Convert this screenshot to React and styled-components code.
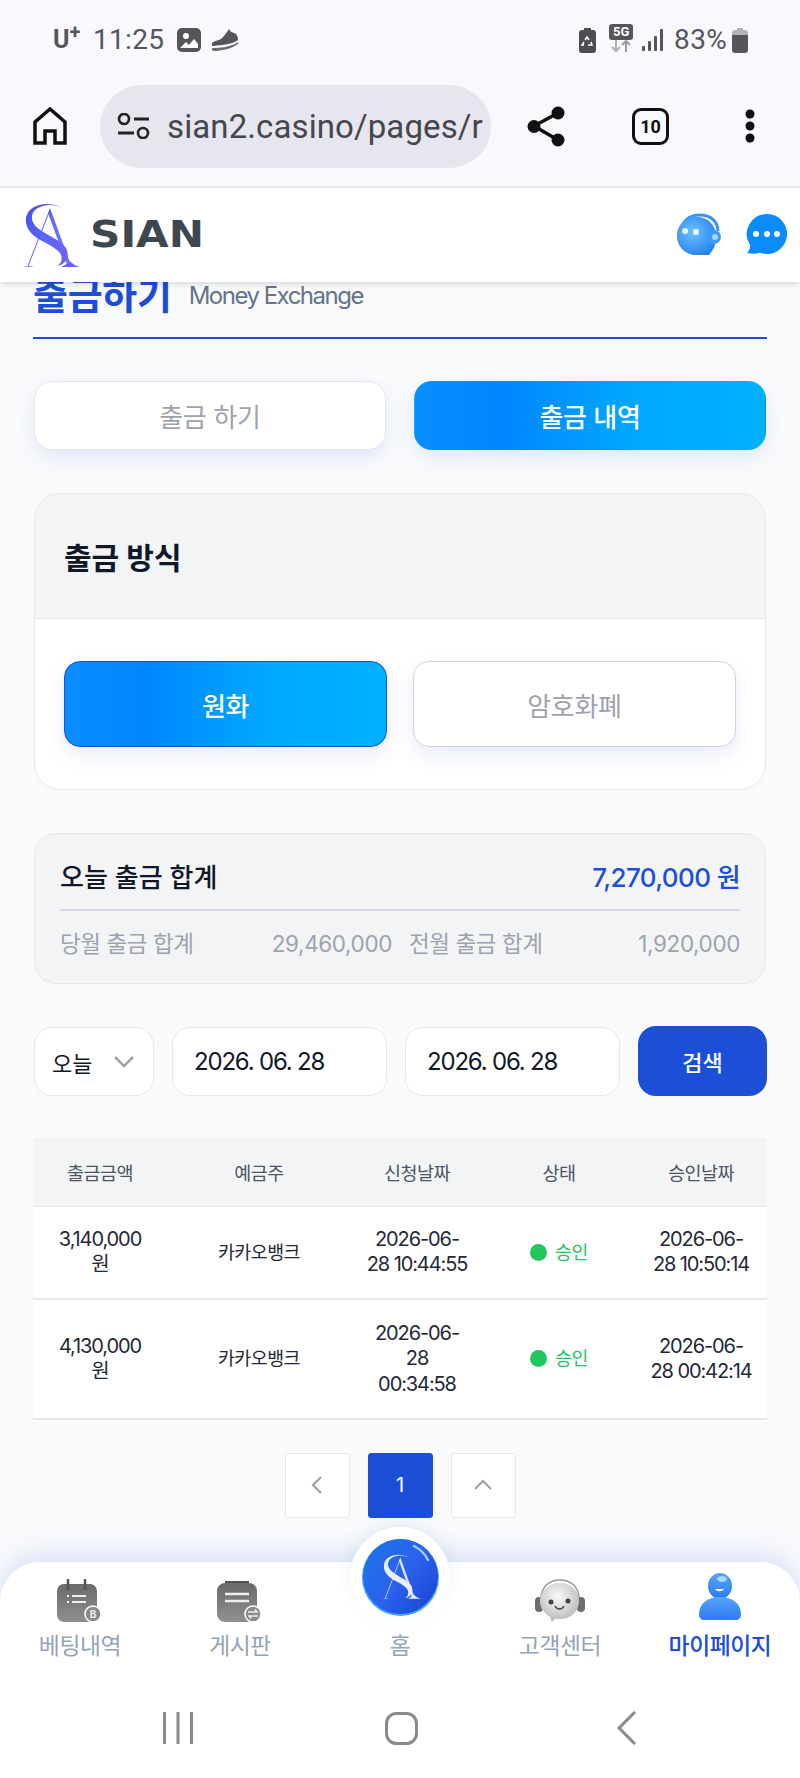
import styled, { createGlobalStyle } from "styled-components";

const GlobalStyle = createGlobalStyle`
  * { box-sizing: border-box; }
  html, body { margin: 0; padding: 0; background: #f9fafc; }
  body { font-family: Inter, "Noto Sans CJK KR", sans-serif; }
  button { font-family: inherit; }
`;

const BLUE = "#1d4ed8";
const GRADIENT = "linear-gradient(90deg, #0a8dff 0%, #0086ff 25%, #00aaff 65%, #00b0ff 100%)";

const Screen = styled.div`
  width: 800px;
  height: 1778px;
  display: flex;
  flex-direction: column;
  overflow: hidden;
  background: #f9fafc;
`;

const StatusBar = styled.div`
  height: 66px;
  padding: 14px 52px 0 53px;
  display: flex;
  align-items: center;
  justify-content: space-between;
  background: #f8f8fe;
  color: #55565b;
  font-family: Roboto, sans-serif;
`;

const StatusGroup = styled.div`
  display: flex;
  align-items: center;
`;

const Carrier = styled.span`
  font-size: 25px;
  font-weight: 700;
  width: 40px;
  line-height: 30px;
  sup { font-size: 20px; line-height: 0; margin-left: 0; vertical-align: 9px; }
`;

const StatusText = styled.span`
  font-size: 28px;
  line-height: 30px;
  letter-spacing: 0.3px;
  margin: ${(p) => p.$margin || 0};
`;

const NetBadge = styled.div`
  width: 24px;
  height: 28px;
  margin: -4px 9px 0 13px;
  display: flex;
  flex-direction: column;
  align-items: center;
`;

const NetLabel = styled.span`
  width: 24px;
  height: 16px;
  border-radius: 3px;
  background: #55565b;
  color: #fff;
  font-size: 13px;
  font-weight: 700;
  line-height: 16px;
  text-align: center;
`;

const BrowserBar = styled.div`
  height: 122px;
  padding: 0 0 0 33px;
  display: flex;
  align-items: center;
  background: #f8f8fe;
  border-bottom: 2px solid #e3e3e8;
`;

const UrlPill = styled.div`
  width: 391px;
  height: 83px;
  margin-left: 33px;
  padding-left: 17px;
  border-radius: 42px;
  background: #e6e6ee;
  display: flex;
  align-items: center;
  gap: 17px;
  overflow: hidden;
`;

const UrlText = styled.span`
  font-family: Roboto, sans-serif;
  font-size: 33px;
  color: #46464c;
  white-space: nowrap;
  letter-spacing: 0.1px;
`;

const BrowserIcon = styled.svg`
  display: block;
  flex: none;
  margin-left: ${(p) => p.$left || 0}px;
`;

const TabCount = styled.div`
  width: 37px;
  height: 37px;
  flex: none;
  margin-left: 67px;
  border: 3.5px solid #111;
  border-radius: 9px;
  font-family: Roboto, sans-serif;
  font-size: 18px;
  font-weight: 700;
  color: #111;
  display: flex;
  align-items: center;
  justify-content: center;
`;

const Viewport = styled.div`
  position: relative;
  flex: 1;
  min-height: 0;
  overflow: hidden;
`;

const SiteHeader = styled.header`
  position: absolute;
  top: 0;
  left: 0;
  right: 0;
  z-index: 3;
  height: 94px;
  padding: 0 12px 0 23px;
  display: flex;
  align-items: center;
  justify-content: space-between;
  background: #fff;
  box-shadow: 0 2px 6px rgba(0, 0, 0, 0.14);
`;

const Brand = styled.div`
  display: flex;
  align-items: center;
  gap: 10px;
`;

const BrandName = styled.span`
  font-family: "DejaVu Sans", sans-serif;
  font-size: 37px;
  font-weight: 700;
  line-height: 40px;
  color: #3d474f;
  transform: scaleX(1.14);
  transform-origin: left center;
`;

const HeaderIcons = styled.div`
  display: flex;
  align-items: center;
  gap: 24px;
  margin-top: -2px;
`;

const Content = styled.main`
  padding: 84px 33px 0;
  display: flex;
  flex-direction: column;
`;

const TitleRow = styled.div`
  display: flex;
  align-items: center;
  gap: 17px;
  height: 67px;
  padding-bottom: 19px;
  border-bottom: 2px solid ${BLUE};
`;

const PageTitle = styled.h1`
  margin: 0;
  font-size: 38px;
  font-weight: 700;
  line-height: 48px;
  letter-spacing: -0.3px;
  color: ${BLUE};
`;

const PageSub = styled.span`
  font-size: 24px;
  letter-spacing: -1.5px;
  color: #64748b;
`;

const Tabs = styled.div`
  display: grid;
  grid-template-columns: 1fr 1fr;
  gap: 28px;
  padding: 0 1px;
  margin: 42px 0 43px;
`;

const Pick = styled.button`
  height: ${(p) => p.$h}px;
  border-radius: ${(p) => p.$r}px;
  border: 1px solid ${(p) => (p.$on ? (p.$line ? BLUE : "transparent") : p.$line ? "#cbd5e1" : "#e5e7eb")};
  background: ${(p) => (p.$on ? GRADIENT : "#fff")};
  color: ${(p) => (p.$on ? "#fff" : "#9ca3af")};
  font-size: 26px;
  font-weight: ${(p) => (p.$on ? 500 : 400)};
  letter-spacing: -0.3px;
  box-shadow: 0 8px 18px rgba(29, 78, 216, 0.1);
  padding: 0;
`;

const MethodCard = styled.section`
  height: 297px;
  margin: 0 1px 43px;
  border: 1px solid #e5e7eb;
  border-radius: 26px;
  background: #fff;
  overflow: hidden;
`;

const MethodHead = styled.div`
  height: 125px;
  padding: 0 29px;
  display: flex;
  align-items: center;
  background: #f3f4f6;
  border-bottom: 1px solid #e5e7eb;
`;

const MethodTitle = styled.h2`
  margin: 0;
  font-size: 30px;
  font-weight: 700;
  color: #111827;
`;

const MethodOptions = styled.div`
  padding: 42px 29px 0;
  display: grid;
  grid-template-columns: 323px 323px;
  gap: 26px;
`;

const Summary = styled.section`
  height: 151px;
  margin: 0 1px 43px;
  padding: 0 25px;
  border: 1px solid #e5e7eb;
  border-radius: 22px;
  background: #f3f4f6;
`;

const SummaryTop = styled.div`
  height: 77px;
  padding-top: 7px;
  display: flex;
  align-items: center;
  justify-content: space-between;
  border-bottom: 2px solid #d5dce8;
  font-size: 26px;
  font-weight: 500;
  color: #111827;
`;

const SummaryAmount = styled.span`
  color: ${BLUE};
  letter-spacing: -0.6px;
`;

const SummaryBottom = styled.div`
  display: grid;
  grid-template-columns: 332px 331px;
  gap: 17px;
  padding-top: 16px;
`;

const SummaryCell = styled.div`
  display: flex;
  justify-content: space-between;
  font-size: 22.5px;
  line-height: 34px;
  letter-spacing: -0.4px;
  color: #9ca3af;
`;

const Filters = styled.div`
  height: 69px;
  margin: 0 0 42px 1px;
  display: flex;
  gap: 18px;
`;

const FieldBox = styled.div`
  width: ${(p) => p.$w}px;
  height: 69px;
  flex: none;
  padding-left: ${(p) => p.$pad}px;
  border: 1px solid #e5e7eb;
  border-radius: 18px;
  background: #fff;
  display: flex;
  align-items: center;
  color: #111827;
  font-size: ${(p) => p.$size}px;
  letter-spacing: ${(p) => p.$spacing || 0}px;
`;

const SearchButton = styled.button`
  width: 129px;
  height: 70px;
  margin-top: -1px;
  border: 0;
  border-radius: 18px;
  background: ${BLUE};
  color: #fff;
  font-size: 22px;
  font-weight: 500;
`;

const HistoryTable = styled.table`
  width: 734px;
  table-layout: fixed;
  border-collapse: collapse;
  background: #fff;
  text-align: center;
`;

const Col = styled.col`
  width: ${(p) => p.$w}px;
`;

const HeadCell = styled.th`
  height: 68px;
  padding: 0;
  background: #f3f4f6;
  color: #4b5563;
  font-size: 18.5px;
  font-weight: 400;
  letter-spacing: -0.5px;
  border-bottom: 1px solid #e5e7eb;
`;

const Row = styled.tr`
  border-bottom: 2px solid #e5e7eb;
`;

const Cell = styled.td`
  padding: 20.5px 0;
  font-size: 20px;
  line-height: 25.4px;
  letter-spacing: -1.1px;
  color: #1f2937;
`;

const BankCell = styled(Cell)`
  font-size: 18.4px;
  letter-spacing: -0.5px;
`;

const Approved = styled.div`
  display: flex;
  align-items: center;
  justify-content: center;
  gap: 8px;
  color: #22c55e;
  font-size: 18.4px;
  letter-spacing: -0.5px;
`;

const Dot = styled.i`
  width: 17px;
  height: 17px;
  border-radius: 50%;
  background: #22c55e;
`;

const Pagination = styled.nav`
  margin-top: 33px;
  display: flex;
  justify-content: center;
  gap: 18px;
`;

const PageButton = styled.button`
  width: 65px;
  height: 65px;
  padding: 0;
  border: 1px solid ${(p) => (p.$on ? BLUE : "#e5e7eb")};
  border-radius: 3px;
  background: ${(p) => (p.$on ? BLUE : "#fff")};
  color: #fff;
  font-size: 20px;
  display: flex;
  align-items: center;
  justify-content: center;
`;

const BottomNav = styled.nav`
  position: absolute;
  left: 0;
  right: 0;
  bottom: 0;
  z-index: 2;
  height: 128px;
  display: grid;
  grid-template-columns: repeat(5, 1fr);
  background: #fff;
  border-radius: 40px 40px 0 0;
  box-shadow: 0 -8px 26px rgba(29, 78, 216, 0.14);
`;

const HomeBump = styled.div`
  position: absolute;
  left: 350px;
  top: -35px;
  width: 100px;
  height: 100px;
  border-radius: 50%;
  background: #fff;
  box-shadow: 0 -6px 16px rgba(29, 78, 216, 0.08);
  display: flex;
  align-items: center;
  justify-content: center;
`;

const NavItem = styled.div`
  position: relative;
  height: 128px;
  padding-top: ${(p) => p.$top}px;
  display: flex;
  flex-direction: column;
  align-items: center;
`;

const NavIconSlot = styled.div`
  height: ${(p) => p.$h}px;
  display: flex;
  align-items: flex-end;
`;

const NavLabel = styled.span`
  position: absolute;
  top: 68px;
  left: 0;
  right: 0;
  text-align: center;
  font-size: 22.8px;
  line-height: 32px;
  font-weight: ${(p) => (p.$on ? 500 : 400)};
  letter-spacing: -0.4px;
  color: ${(p) => (p.$on ? BLUE : "#94a3b8")};
`;

const SystemBar = styled.div`
  height: 88px;
  padding: 0 0 12px 163px;
  display: flex;
  align-items: center;
  background: #fff;
`;

// the S/A monogram of the brand, drawn in a 57x65 box
const SaShapes = ({ fill }) => (
  <g fill={fill}>
    <path d="M39 5C31 0 17-1 8 6 1 12 1 22 8 30 15 38 31 42 37 50 40 55 39 60 34 63 44 61 47 53 43 45 36 35 17 30 11 21 7 15 9 8 15 5 22 1 32 1 39 5Z" />
    <path d="M27 5 48 62H44L25 10Z" opacity="0.9" />
    <path d="M26.300 7 27 8 5.500 63 4.500 63Z" />
    <path d="M0 64C4 63 8 63 11 64ZM38 64C42 62 46 60 47 58 49 61 53 63 57 64Z" />
  </g>
);

const LogoMark = () => (
  <svg width="57" height="65" viewBox="0 0 57 65" style={{ display: "block", flex: "none" }}>
    <defs>
      <linearGradient id="saGrad" x1="0" y1="0" x2="1" y2="1">
        <stop offset="0" stopColor="#4a4fe0" />
        <stop offset="0.5" stopColor="#5a66ff" />
        <stop offset="1" stopColor="#7a5cf0" />
      </linearGradient>
    </defs>
    <SaShapes fill="url(#saGrad)" />
  </svg>
);

const BotIcon = () => (
  <svg width="46" height="43" viewBox="0 0 46 43">
    <defs>
      <radialGradient id="botGrad" cx="0.4" cy="0.4" r="0.7">
        <stop offset="0" stopColor="#6fc0ff" />
        <stop offset="1" stopColor="#1f7ff0" />
      </radialGradient>
    </defs>
    <path d="M5 20C5 8 13 2 24 2s18 7 18 16" fill="none" stroke="#3b94f5" strokeWidth="3" />
    <path d="M21 4a19 18 0 0 0-20 19c0 11 9 19 19 19h13l3-4c3-4 4-9 4-15C40 12 32 4 21 4Z" fill="url(#botGrad)" />
    <circle cx="38" cy="24" r="7" fill="#3f9bf7" />
    <circle cx="39" cy="24" r="3" fill="#a6d6ff" />
    <circle cx="9" cy="18" r="3" fill="#e8f5ff" />
    <circle cx="20" cy="19" r="3" fill="#e8f5ff" />
  </svg>
);

const ChatIcon = () => (
  <svg width="42" height="42" viewBox="0 0 42 42">
    <path d="M21 1a20 20 0 1 1-7 38.700C10 41 5 41 1 40c2-2 3.500-5 3-8A20 20 0 0 1 21 1Z" fill="#0a8cff" />
    <circle cx="10" cy="21" r="3" fill="#fff" />
    <circle cx="21" cy="21" r="3" fill="#fff" />
    <circle cx="31" cy="21" r="3" fill="#fff" />
  </svg>
);

const CalendarIcon = () => (
  <svg width="46" height="44" viewBox="0 0 46 44">
    <defs>
      <linearGradient id="grayA" x1="0" y1="0" x2="0" y2="1">
        <stop offset="0" stopColor="#6a6a6a" />
        <stop offset="1" stopColor="#909090" />
      </linearGradient>
    </defs>
    <rect x="0" y="5" width="40" height="38" rx="7" fill="url(#grayA)" />
    <path d="M11 0v10M28 0v10" stroke="#555" strokeWidth="2.500" strokeLinecap="round" />
    <path d="M15 17h14M15 23h14M10 17h2M10 23h2" stroke="#eee" strokeWidth="2" />
    <circle cx="36" cy="35" r="8" fill="#8a8a8a" stroke="#fff" strokeWidth="1.500" />
    <text x="36" y="39" fontSize="10" fontWeight="700" fill="#eee" textAnchor="middle" fontFamily="Inter, sans-serif">
      B
    </text>
  </svg>
);

const BoardIcon = () => (
  <svg width="46" height="44" viewBox="0 0 46 44">
    <path d="M8 2h24v5H8z" fill="#555" />
    <rect x="0" y="4" width="40" height="39" rx="8" fill="url(#grayA)" />
    <path d="M8 15h24M8 22h24" stroke="#eee" strokeWidth="2.500" />
    <circle cx="36" cy="35" r="8" fill="#8a8a8a" stroke="#fff" strokeWidth="1.500" />
    <path d="M31 33h9l-2-2.500M41 37h-9l2 2.500" fill="none" stroke="#eee" strokeWidth="1.500" />
  </svg>
);

const AgentIcon = () => (
  <svg width="50" height="44" viewBox="0 0 50 44">
    <defs>
      <radialGradient id="agentGrad" cx="0.45" cy="0.35" r="0.7">
        <stop offset="0" stopColor="#fafafa" />
        <stop offset="1" stopColor="#b5b5b5" />
      </radialGradient>
    </defs>
    <path d="M6 20C6 8 14 1 25 1s19 7 19 19" fill="none" stroke="#9a9a9a" strokeWidth="1.500" />
    <rect x="0" y="18" width="8" height="15" rx="4" fill="#6e6e6e" />
    <rect x="42" y="18" width="8" height="15" rx="4" fill="#6e6e6e" />
    <path d="M25 4c11 0 19 8 19 18 0 11-9 18-19 18h-5l-3 3-2-5C9 34 5 29 5 22 5 12 14 4 25 4Z" fill="url(#agentGrad)" />
    <circle cx="16" cy="23" r="2.500" fill="#444" />
    <circle cx="33" cy="22" r="2.500" fill="#444" />
    <path d="M20 27c2 4 7 4 9 0" fill="none" stroke="#444" strokeWidth="1.500" />
  </svg>
);

const PersonIcon = () => (
  <svg width="44" height="47" viewBox="0 0 44 47">
    <defs>
      <linearGradient id="personGrad" x1="0" y1="0" x2="0" y2="1">
        <stop offset="0" stopColor="#55a5fa" />
        <stop offset="1" stopColor="#2c7bf0" />
      </linearGradient>
    </defs>
    <ellipse cx="22" cy="13" rx="12" ry="13" fill="url(#personGrad)" />
    <ellipse cx="24" cy="6" rx="5" ry="3" fill="#a9d6ff" />
    <path d="M17 16c2 3 7 3 9 0Z" fill="#fff" />
    <path d="M22 24c13 0 21 7 21 17 0 4-2 6-6 6H7c-4 0-6-2-6-6 0-10 8-17 21-17Z" fill="url(#personGrad)" />
  </svg>
);

const HomeBadge = () => (
  <svg width="77" height="77" viewBox="0 0 77 77">
    <defs>
      <linearGradient id="homeGrad" x1="0" y1="0" x2="1" y2="0.8">
        <stop offset="0" stopColor="#1a76e6" />
        <stop offset="0.55" stopColor="#2b62ee" />
        <stop offset="1" stopColor="#1f46d6" />
      </linearGradient>
    </defs>
    <circle cx="38.500" cy="38.500" r="38.500" fill="#3ea4ff" />
    <circle cx="38.500" cy="37.500" r="37.500" fill="url(#homeGrad)" />
    <path d="M52 7c6 3 11 8 14 14" fill="none" stroke="#9ad0ff" strokeWidth="2.500" strokeLinecap="round" />
    <g transform="translate(20 15) scale(0.68 0.7)">
      <SaShapes fill="#e8f0ff" />
    </g>
  </svg>
);

const methods = [
  { label: "원화", on: true },
  { label: "암호화폐", on: false },
];

const columns = [
  { label: "출금금액", width: 134 },
  { label: "예금주", width: 184 },
  { label: "신청날짜", width: 132 },
  { label: "상태", width: 152 },
  { label: "승인날짜", width: 132 },
];

const rows = [
  {
    amount: ["3,140,000", "원"],
    requested: ["2026-06-", "28 10:44:55"],
    approved: ["2026-06-", "28 10:50:14"],
  },
  {
    amount: ["4,130,000", "원"],
    requested: ["2026-06-", "28", "00:34:58"],
    approved: ["2026-06-", "28 00:42:14"],
  },
];

const navItems = [
  { label: "베팅내역", icon: <CalendarIcon /> },
  { label: "게시판", icon: <BoardIcon /> },
  { label: "홈", icon: null },
  { label: "고객센터", icon: <AgentIcon /> },
  { label: "마이페이지", icon: <PersonIcon />, on: true },
];

const Lines = ({ items }) =>
  items.map((line, i) => (
    <span key={i}>
      {i > 0 && <br />}
      {line}
    </span>
  ));

const App = () => {
  return (
    <Screen>
      <GlobalStyle />

      <StatusBar>
        <StatusGroup>
          <Carrier>
            U<sup>+</sup>
          </Carrier>
          <StatusText>11:25</StatusText>
          <svg width="24" height="24" viewBox="0 0 24 24" style={{ marginLeft: 13 }}>
            <rect width="24" height="24" rx="5" fill="#55565b" />
            <circle cx="9" cy="8" r="3" fill="#fff" />
            <path d="M3 20l6-6 3 3 5-6 4 5v4z" fill="#fff" />
          </svg>
          <svg width="28" height="22" viewBox="0 0 28 22" style={{ marginLeft: 10 }}>
            <path d="M1 15C1 12 6 12 10 10 13 8 14 5 16 3L18 0C19 2 20 3 23 4 26 5 27 8 27 11 20 16 10 16 1 17Z" fill="#55565b" />
            <path d="M1 19C9 19 20 18 27 13V15C20 20 10 22 3 22 1 22 1 20 1 19Z" fill="#6c6c70" />
          </svg>
        </StatusGroup>
        <StatusGroup>
          <svg width="17" height="25" viewBox="0 0 17 25">
            <path d="M5 0h7v2h2a3 3 0 0 1 3 3v17a3 3 0 0 1-3 3H3a3 3 0 0 1-3-3V5a3 3 0 0 1 3-3h2Z" fill="#4d4d52" />
            <path d="M6 12l2-3 2 3M12 14l1 3H9M5 17H3l2-3" fill="none" stroke="#fff" strokeWidth="1.500" />
          </svg>
          <NetBadge>
            <NetLabel>5G</NetLabel>
            <svg width="22" height="12" viewBox="0 0 22 12">
              <path d="M6 0v11M2 7l4 4 4-4" fill="none" stroke="#b0b0b5" strokeWidth="2" />
              <path d="M16 12V1M12 5l4-4 4 4" fill="none" stroke="#9a9aa0" strokeWidth="2" />
            </svg>
          </NetBadge>
          <svg width="21" height="22" viewBox="0 0 21 22">
            <rect x="0" y="17" width="3" height="5" rx="1" fill="#55565b" />
            <rect x="6" y="12" width="3" height="10" rx="1" fill="#55565b" />
            <rect x="12" y="7" width="3" height="15" rx="1" fill="#55565b" />
            <rect x="18" y="0" width="3" height="22" rx="1" fill="#55565b" />
          </svg>
          <StatusText $margin="0 5px 0 11px">83%</StatusText>
          <svg width="16" height="25" viewBox="0 0 16 25">
            <path d="M5 0h6v2h2a3 3 0 0 1 3 3v3H0V5a3 3 0 0 1 3-3h2Z" fill="#b4b4b8" />
            <path d="M0 7h16v15a3 3 0 0 1-3 3H3a3 3 0 0 1-3-3Z" fill="#55565b" />
          </svg>
        </StatusGroup>
      </StatusBar>

      <BrowserBar>
        <BrowserIcon width="34" height="38" viewBox="0 0 34 38">
          <path d="M2 36V15L17 2l15 13v21H22V24H12v12Z" fill="none" stroke="#111" strokeWidth="3.500" strokeLinejoin="miter" />
        </BrowserIcon>
        <UrlPill>
          <BrowserIcon width="33" height="26" viewBox="0 0 33 26">
            <circle cx="7" cy="6" r="5" fill="none" stroke="#222" strokeWidth="2.600" />
            <path d="M17 6h15M1 20h16" stroke="#222" strokeWidth="2.800" />
            <circle cx="26" cy="20" r="5" fill="none" stroke="#222" strokeWidth="2.600" />
          </BrowserIcon>
          <UrlText>sian2.casino/pages/r</UrlText>
        </UrlPill>
        <BrowserIcon width="38" height="41" viewBox="0 0 38 41" $left={36}>
          <path d="M31 7L7 20l24 14" fill="none" stroke="#111" strokeWidth="3.500" />
          <circle cx="31" cy="7" r="6.500" fill="#111" />
          <circle cx="7" cy="20.500" r="6.500" fill="#111" />
          <circle cx="31" cy="34" r="6.500" fill="#111" />
        </BrowserIcon>
        <TabCount>10</TabCount>
        <BrowserIcon width="10" height="34" viewBox="0 0 10 34" $left={76}>
          <circle cx="5" cy="5" r="4.500" fill="#111" />
          <circle cx="5" cy="17" r="4.500" fill="#111" />
          <circle cx="5" cy="29" r="4.500" fill="#111" />
        </BrowserIcon>
      </BrowserBar>

      <Viewport>
        <SiteHeader>
          <Brand>
            <LogoMark />
            <BrandName>SIAN</BrandName>
          </Brand>
          <HeaderIcons>
            <BotIcon />
            <ChatIcon />
          </HeaderIcons>
        </SiteHeader>

        <Content>
          <TitleRow>
            <PageTitle>출금하기</PageTitle>
            <PageSub>Money Exchange</PageSub>
          </TitleRow>

          <Tabs>
            <Pick $h={69} $r={18}>
              출금 하기
            </Pick>
            <Pick $h={69} $r={18} $on>
              출금 내역
            </Pick>
          </Tabs>

          <MethodCard>
            <MethodHead>
              <MethodTitle>출금 방식</MethodTitle>
            </MethodHead>
            <MethodOptions>
              {methods.map((m) => (
                <Pick key={m.label} $h={86} $r={16} $on={m.on} $line>
                  {m.label}
                </Pick>
              ))}
            </MethodOptions>
          </MethodCard>

          <Summary>
            <SummaryTop>
              <span>오늘 출금 합계</span>
              <SummaryAmount>7,270,000 원</SummaryAmount>
            </SummaryTop>
            <SummaryBottom>
              <SummaryCell>
                <span>당월 출금 합계</span>
                <span>29,460,000</span>
              </SummaryCell>
              <SummaryCell>
                <span>전월 출금 합계</span>
                <span>1,920,000</span>
              </SummaryCell>
            </SummaryBottom>
          </Summary>

          <Filters>
            <FieldBox $w={120} $pad={17} $size={22}>
              오늘
              <svg width="20" height="12" viewBox="0 0 20 12" style={{ marginLeft: 22 }}>
                <path d="M1 1l9 9 9-9" fill="none" stroke="#9ca3af" strokeWidth="2.500" />
              </svg>
            </FieldBox>
            <FieldBox $w={215} $pad={21} $size={24} $spacing={-1.2}>
              2026. 06. 28
            </FieldBox>
            <FieldBox $w={215} $pad={21} $size={24} $spacing={-1.2}>
              2026. 06. 28
            </FieldBox>
            <SearchButton>검색</SearchButton>
          </Filters>

          <HistoryTable>
            <colgroup>
              {columns.map((c) => (
                <Col key={c.label} $w={c.width} />
              ))}
            </colgroup>
            <thead>
              <tr>
                {columns.map((c) => (
                  <HeadCell key={c.label}>{c.label}</HeadCell>
                ))}
              </tr>
            </thead>
            <tbody>
              {rows.map((r) => (
                <Row key={r.amount[0]}>
                  <Cell>
                    <Lines items={r.amount} />
                  </Cell>
                  <BankCell>카카오뱅크</BankCell>
                  <Cell>
                    <Lines items={r.requested} />
                  </Cell>
                  <Cell>
                    <Approved>
                      <Dot />
                      승인
                    </Approved>
                  </Cell>
                  <Cell>
                    <Lines items={r.approved} />
                  </Cell>
                </Row>
              ))}
            </tbody>
          </HistoryTable>

          <Pagination>
            <PageButton>
              <svg width="12" height="20" viewBox="0 0 12 20">
                <path d="M10 2l-8 8 8 8" fill="none" stroke="#9ca3af" strokeWidth="2.200" />
              </svg>
            </PageButton>
            <PageButton $on>1</PageButton>
            <PageButton>
              <svg width="20" height="12" viewBox="0 0 20 12">
                <path d="M2 10l8-8 8 8" fill="none" stroke="#9ca3af" strokeWidth="2.200" />
              </svg>
            </PageButton>
          </Pagination>
        </Content>

        <BottomNav>
          {navItems.map((item) => (
            <NavItem key={item.label} $top={item.on ? 14 : 17}>
              <NavIconSlot $h={44}>{item.icon}</NavIconSlot>
              <NavLabel $on={item.on}>{item.label}</NavLabel>
            </NavItem>
          ))}
          <HomeBump>
            <HomeBadge />
          </HomeBump>
        </BottomNav>
      </Viewport>

      <SystemBar>
        <svg width="30" height="32" viewBox="0 0 30 32">
          <path d="M1.500 0v32M15 0v32M28.500 0v32" stroke="#8a8a8a" strokeWidth="3" />
        </svg>
        <svg width="33" height="33" viewBox="0 0 33 33" style={{ marginLeft: 192 }}>
          <rect x="1.500" y="1.500" width="30" height="30" rx="10" fill="none" stroke="#8a8a8a" strokeWidth="3" />
        </svg>
        <svg width="20" height="34" viewBox="0 0 20 34" style={{ marginLeft: 199 }}>
          <path d="M18 1L2 17l16 16" fill="none" stroke="#8a8a8a" strokeWidth="3" />
        </svg>
      </SystemBar>
    </Screen>
  );
};

export default App;
